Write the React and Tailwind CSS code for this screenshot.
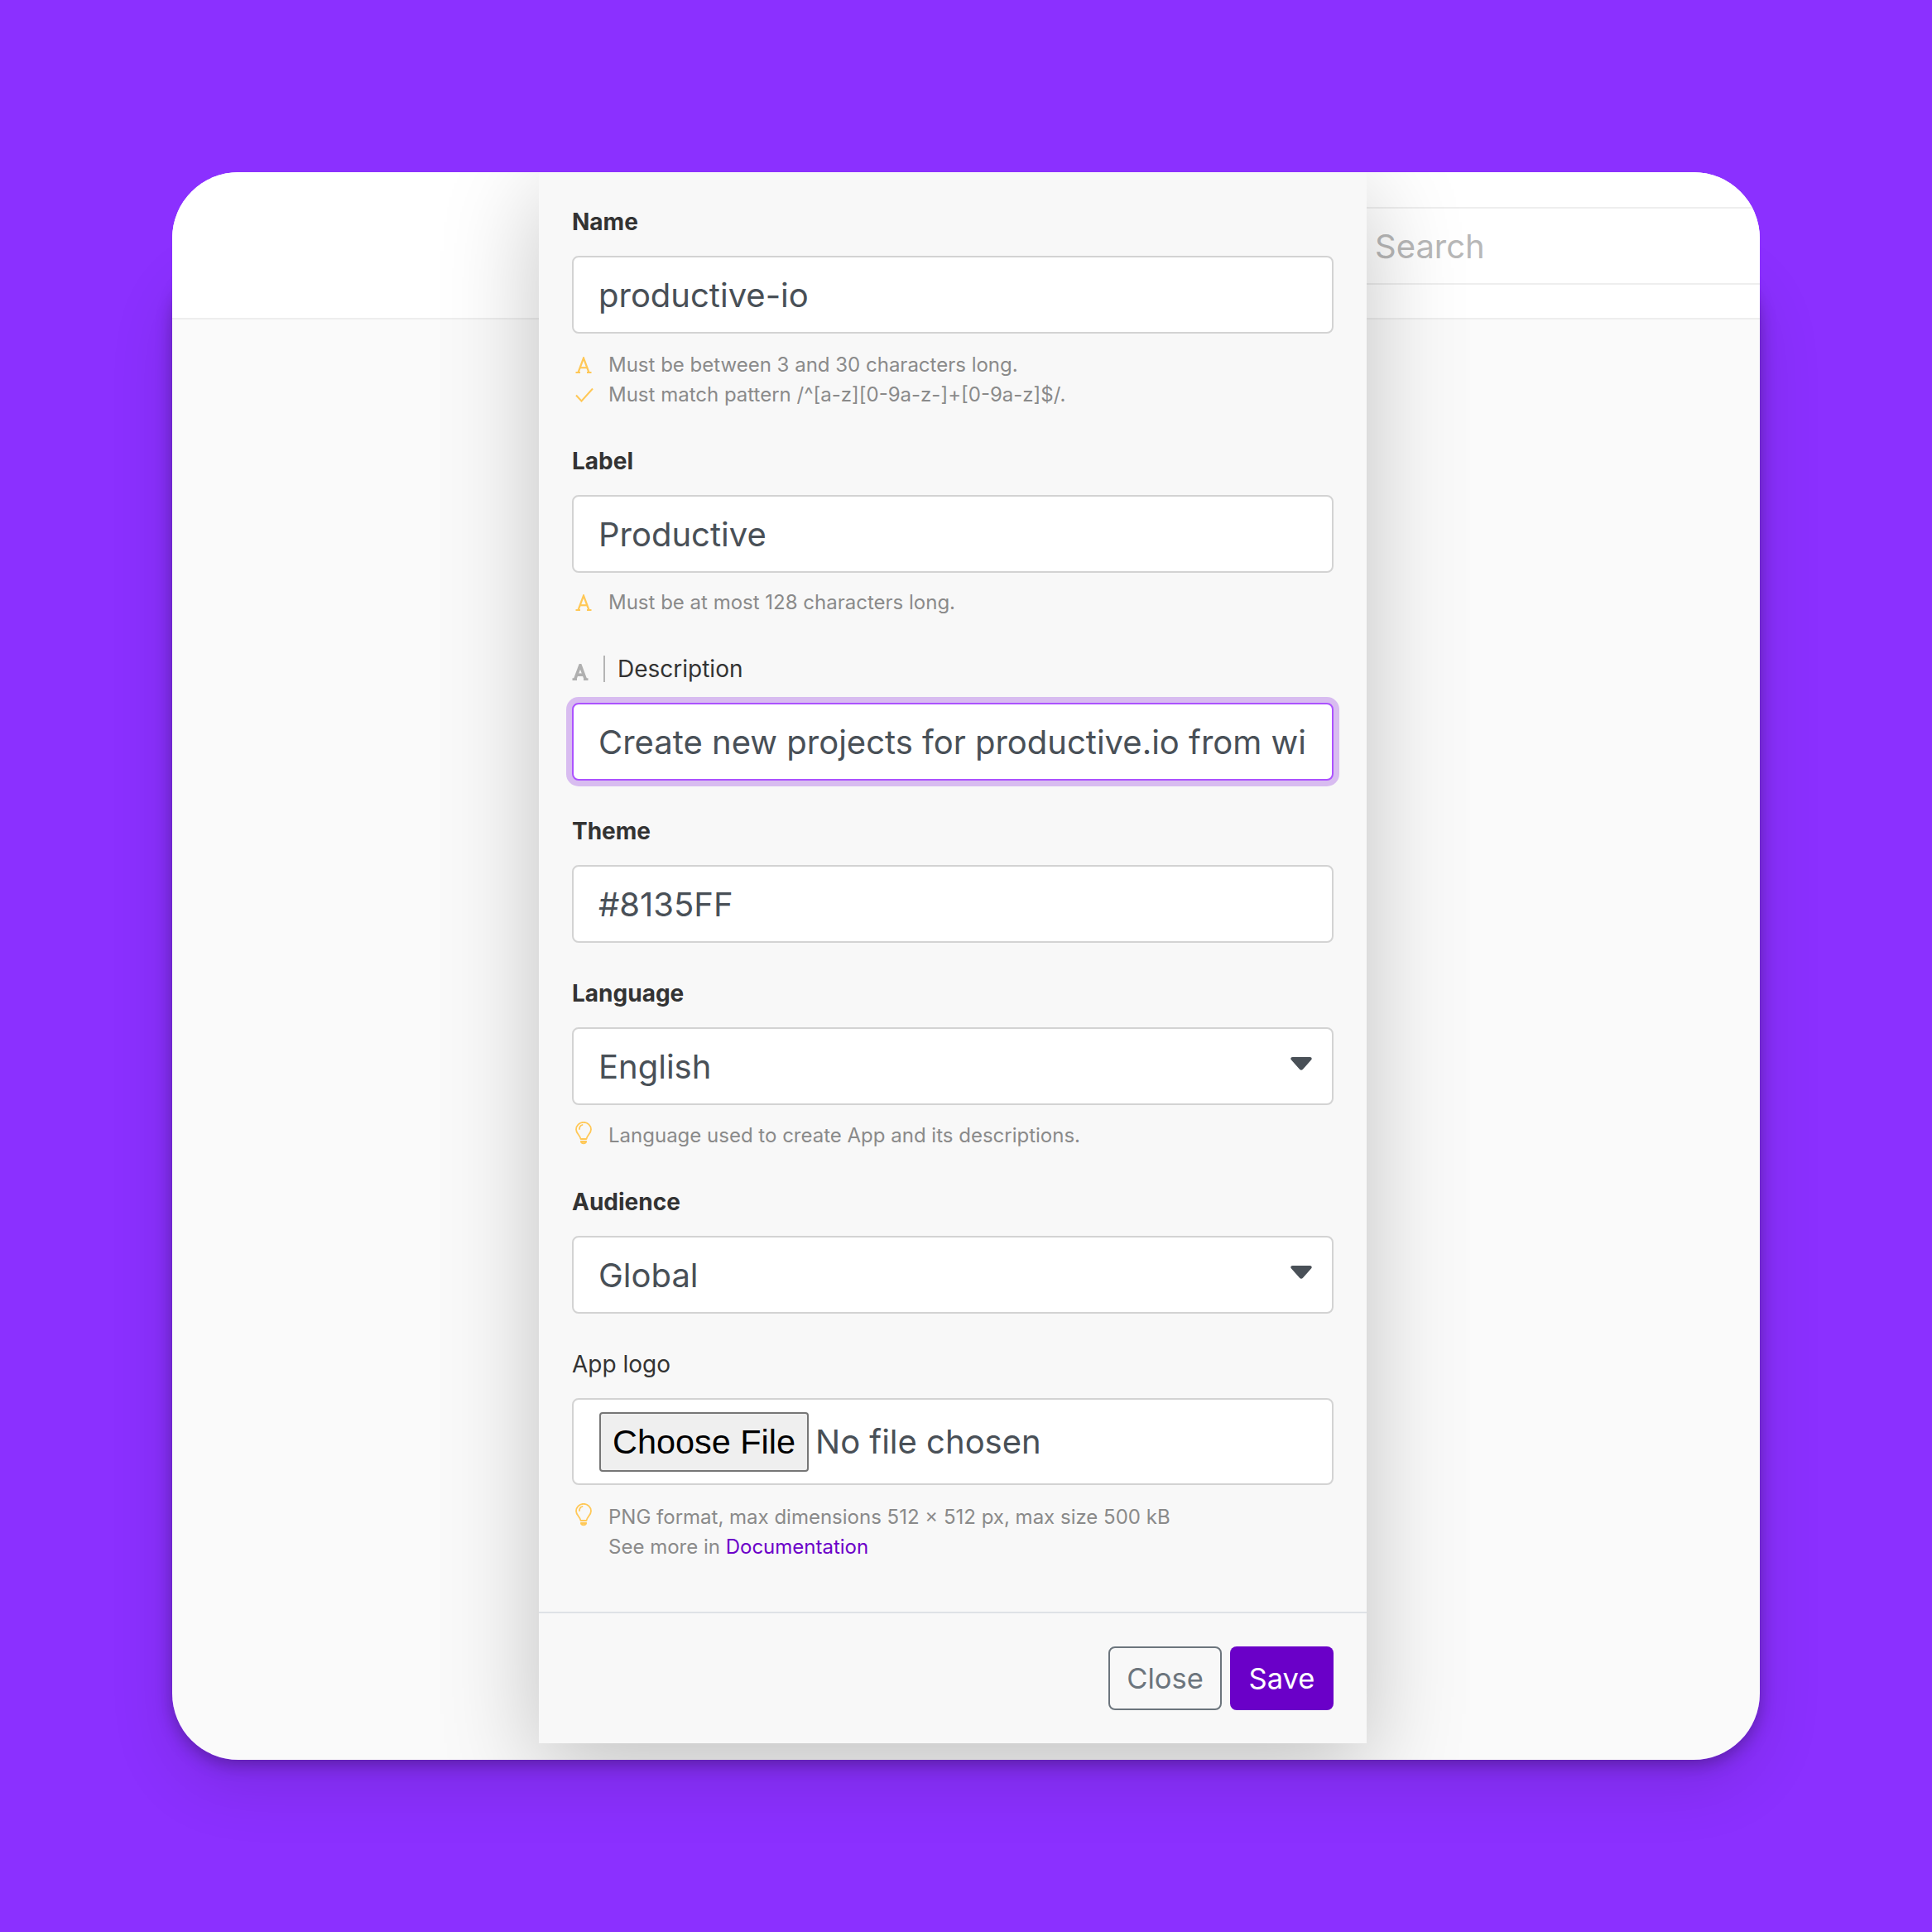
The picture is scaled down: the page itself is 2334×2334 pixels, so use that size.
const AIcon = ({ className, sw = 2.2 }) => (
  <svg viewBox="0 0 20 20" fill="none" stroke="currentColor" strokeWidth={sw} className={className}>
    <path d="M3.5 19 L10 1.5 L16.5 19" />
    <path d="M5.6 13.2 H14.4" />
    <path d="M0.5 19 H6 M14 19 H19.5" />
  </svg>
);

const Check = () => (
  <svg viewBox="0 0 22 18" fill="none" stroke="currentColor" strokeWidth="2" className="w-[22px] h-[18px]">
    <path d="M1 9.5 L7.5 16.5 L21 1.5" />
  </svg>
);

const Bulb = () => (
  <svg viewBox="0 0 20 28" fill="none" stroke="currentColor" strokeWidth="1.8" strokeLinecap="round" strokeLinejoin="round" className="w-[20px] h-[28px] self-start mt-[1px]">
    <path d="M6.5 21 C6 16.5 1 14.5 1 9.5 A9 8.7 0 0 1 19 9.5 C19 14.5 14 16.5 13.5 21 Z" />
    <path d="M5 9 C5 6.5 6.5 4.5 8.5 4" />
    <path d="M6.8 24 H13.2 C13 27 7 27 6.8 24 Z" fill="currentColor" fillOpacity="0.25" />
  </svg>
);

const Caret = () => (
  <svg viewBox="0 0 26 16" className="w-[26px] h-[16px] absolute right-[24px] top-[34px]" fill="#495057">
    <path d="M2.5 0 H23.5 C25.5 0 26.5 2 25 3.6 L15 14.8 C13.8 16.2 12.2 16.2 11 14.8 L1 3.6 C-0.5 2 0.5 0 2.5 0 Z" />
  </svg>
);

const Label = ({ children, className = "" }) => (
  <div className={`text-[28px] leading-[36px] font-bold text-[#333333] mb-[23px] ${className}`}>{children}</div>
);

const Box = ({ children, focused, select }) => (
  <div
    className={`relative h-[94px] rounded-[8px] bg-white flex items-center px-[30px] text-[40px] text-[#495057] whitespace-nowrap border-2 ${
      focused ? "border-[#ac52ff] shadow-[0_0_0_7px_#d8bcf0]" : "border-[#d3d3d3]"
    }`}
  >
    <div className="overflow-hidden w-full pt-[1px]">{children}</div>
    {select && <Caret />}
  </div>
);

const Hint = ({ icon, children }) => (
  <div className="flex text-[24px] leading-[36px] text-[#8a8a8a]">
    <div className="w-[44px] h-[36px] pl-[4px] shrink-0 flex items-center text-[#ffc857]">{icon}</div>
    <div>{children}</div>
  </div>
);

export default function App() {
  return (
    <div className="w-[2334px] h-[2334px] bg-[#8b30ff] p-[208px] font-['Inter',sans-serif]">
      <div className="relative w-[1918px] h-[1918px]">
        {/* card shadow: starts below the top corners */}
        <div className="absolute inset-x-0 top-[100px] bottom-0 rounded-[80px] shadow-[0_6px_20px_rgba(0,0,0,0.28),0_30px_80px_rgba(0,0,0,0.12)]" />

        <div className="absolute inset-0 rounded-[80px] overflow-hidden bg-[#fafafa]">
          {/* page behind the modal */}
          <div className="h-[178px] bg-white border-b-2 border-[#eeeeee] flex justify-end">
            <div className="w-[476px] h-[94px] mt-[42px] pt-[2px] border-y-2 border-[#eeeeee] flex items-center pl-[11px] text-[40px] text-[#b8b8b8]">
              Search
            </div>
          </div>

          {/* modal */}
          <div className="absolute left-[443px] top-0 w-[1000px] h-[1898px] bg-[#f8f8f8] shadow-[0_30px_110px_rgba(0,0,0,0.23)] flex flex-col">
            <div className="px-[40px] pt-[42px]">
              <Label>Name</Label>
              <Box>productive-io</Box>
              <div className="mt-[20px]">
                <Hint icon={<AIcon className="w-[20px] h-[20px]" />}>Must be between 3 and 30 characters long.</Hint>
                <Hint icon={<Check />}>Must match pattern /^[a-z][0-9a-z-]+[0-9a-z]$/.</Hint>
              </div>

              <Label className="mt-[44px]">Label</Label>
              <Box>Productive</Box>
              <div className="mt-[18px]">
                <Hint icon={<AIcon className="w-[20px] h-[20px]" />}>Must be at most 128 characters long.</Hint>
              </div>

              <div className="mt-[44px] mb-[23px] h-[36px] flex items-center text-[28px] leading-[36px] text-[#333333]">
                <AIcon className="w-[20px] h-[20px] mt-[8px] text-[#b0b0b0]" sw={3.6} />
                <div className="w-[2px] h-[32px] bg-[#b5b5b5] ml-[18px] mr-[15px]" />
                Description
              </div>
              <Box focused>Create new projects for productive.io from wizard</Box>

              <Label className="mt-[43px]">Theme</Label>
              <Box>#8135FF</Box>

              <Label className="mt-[43px]">Language</Label>
              <Box select>English</Box>
              <div className="mt-[19px]">
                <Hint icon={<Bulb />}>Language used to create App and its descriptions.</Hint>
              </div>

              <Label className="mt-[44px]">Audience</Label>
              <Box select>Global</Box>

              <div className="mt-[43px] mb-[23px] text-[28px] leading-[36px] text-[#333333]">App logo</div>
              <div className="h-[105px] rounded-[8px] bg-white border-2 border-[#d3d3d3] flex items-center pl-[31px] text-[40px] text-[#495057] whitespace-nowrap">
                <button className="w-[253px] h-[72px] pt-[2px] mr-[8px] bg-[#efefef] border-2 border-[#767676] rounded-[4px] text-black font-['Liberation_Sans',sans-serif] text-[41.4px]">
                  Choose File
                </button>
                No file chosen
              </div>
              <div className="mt-[21px]">
                <Hint icon={<Bulb />}>
                  PNG format, max dimensions 512 × 512 px, max size 500 kB
                  <br />
                  See more in <span className="text-[#6c00c9]">Documentation</span>
                </Hint>
              </div>
            </div>

            <div className="mt-auto h-[159px] border-t-2 border-[#dee2e6] flex justify-end gap-[10px] px-[40px] pt-[40px] text-[34.5px]">
              <button className="w-[137px] h-[77px] rounded-[8px] border-2 border-[#6c757d] text-[#6c757d]">Close</button>
              <button className="w-[125px] h-[77px] rounded-[8px] bg-[#6a00c8] text-white">Save</button>
            </div>
          </div>
        </div>
      </div>
    </div>
  );
}
